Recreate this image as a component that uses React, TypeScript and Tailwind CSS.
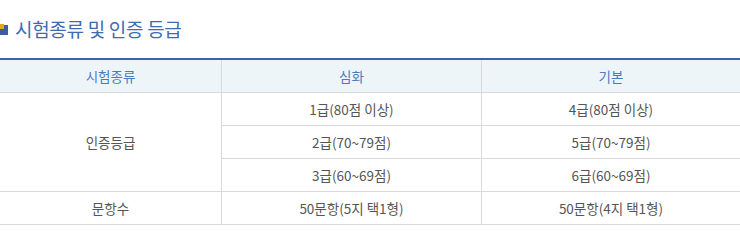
const rows = [
  { left: "1급(80점 이상)", right: "4급(80점 이상)" },
  { left: "2급(70~79점)", right: "5급(70~79점)" },
  { left: "3급(60~69점)", right: "6급(60~69점)" },
];

const cell = "h-[33px] p-0 text-center align-middle border-b border-[#d9d9d9]";

export default function App() {
  return (
    <div className="w-[740px] h-[246px] bg-white font-['Malgun_Gothic','Noto_Sans_CJK_KR',sans-serif]">
      {/* section title */}
      <div className="h-[58px] flex items-center gap-[7px] pb-px">
        <span className="relative block w-[8px] h-[11px] mt-[2px]">
          <span className="absolute left-0 top-[1px] w-[8px] h-[10px] bg-[#3b5f9c]" />
          <span className="absolute left-0 top-0 w-[4px] h-[5px] bg-[#e0a91e]" />
        </span>
        <h2 className="text-[19px] leading-none text-[#3d6db1] tracking-[-0.3px]">
          시험종류 및 인증 등급
        </h2>
      </div>

      <table className="w-[740px] table-fixed border-separate border-spacing-0 border-t-2 border-[#3b63a5] text-[13.5px] text-[#555]">
        <colgroup>
          <col className="w-[222px]" />
          <col className="w-[260px]" />
          <col className="w-[258px]" />
        </colgroup>
        <thead>
          <tr className="bg-[#eef5f9] text-[#4a7bc1]">
            <th className={`${cell} font-normal border-r`}>시험종류</th>
            <th className={`${cell} font-normal border-r`}>심화</th>
            <th className={`${cell} font-normal`}>기본</th>
          </tr>
        </thead>
        <tbody>
          {rows.map((r, i) => (
            <tr key={i}>
              {i === 0 && (
                <td rowSpan={3} className={`${cell} border-r`}>
                  인증등급
                </td>
              )}
              <td className={`${cell} border-r`}>{r.left}</td>
              <td className={cell}>{r.right}</td>
            </tr>
          ))}
          <tr>
            <td className={`${cell} border-r`}>문항수</td>
            <td className={`${cell} border-r`}>50문항(5지 택1형)</td>
            <td className={cell}>50문항(4지 택1형)</td>
          </tr>
        </tbody>
      </table>
    </div>
  );
}
